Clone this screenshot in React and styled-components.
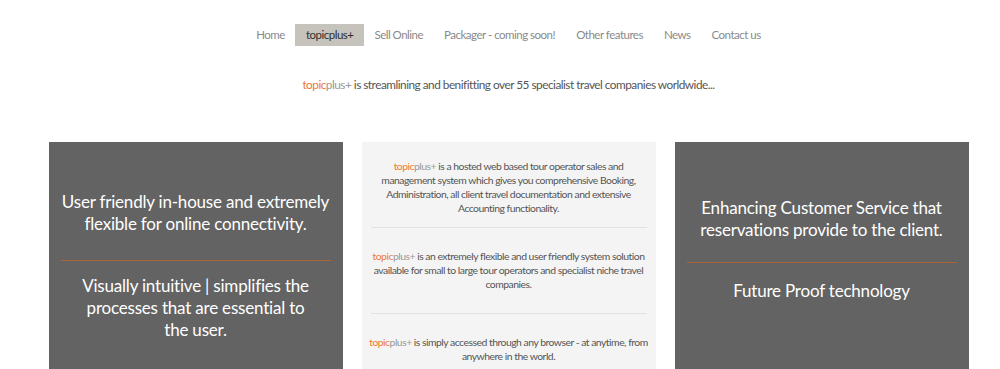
import React from 'react';
import styled, { createGlobalStyle } from 'styled-components';

const GlobalStyle = createGlobalStyle`
  html, body {
    margin: 0;
    padding: 0;
    background: #fff;
  }
  body {
    font-family: "Lato", "Open Sans", sans-serif;
    overflow: hidden;
  }
`;

const Page = styled.div`
  width: 1000px;
  height: 369px;
  overflow: hidden;
`;

const Nav = styled.ul`
  list-style: none;
  margin: 0;
  padding: 24px 0 0 17px;
  display: flex;
  justify-content: center;
`;

const NavItem = styled.li`
  height: 22px;
  line-height: 22px;
  padding: 0 10.5px;
  font-size: 11.5px;
  letter-spacing: -0.5px;
  color: ${props => (props.active ? '#2f2f2f' : '#8a8a8a')};
  background: ${props => (props.active ? '#c6c3bc' : 'transparent')};
`;

const Tagline = styled.p`
  margin: 31px 0 0;
  padding-left: 17px;
  text-align: center;
  font-size: 11.8px;
  letter-spacing: -0.5px;
  color: #555;
`;

const Topic = styled.span`
  color: #f07a2f;
`;

const Plus = styled.span`
  color: #999;
`;

const Cards = styled.div`
  display: grid;
  grid-template-columns: repeat(3, 294px);
  justify-content: center;
  gap: 19px;
  margin: 50px 0 0 17px;
`;

const DarkCard = styled.div`
  background: #636363;
  height: 240px;
  padding: ${props => props.top}px 12px 0;
  color: #fff;
  font-size: 17px;
  letter-spacing: -0.2px;
  line-height: 22px;
  text-align: center;
`;

const Statement = styled.p`
  margin: 0;
  padding: 0 ${props => props.inset || 0}px;
`;

const Rule = styled.hr`
  border: none;
  border-top: 1px solid ${props => props.color};
  margin: ${props => props.above}px ${props => props.side || 0}px ${props => props.below}px;
`;

const LightCard = styled.div`
  background: #f4f4f4;
  height: 240px;
  padding: 17px 6px 0;
  font-size: 10.4px;
  letter-spacing: -0.5px;
  line-height: 14px;
  color: #555;
  text-align: center;
`;

const Para = styled.p`
  margin: 0;
  padding: 0 ${props => props.inset || 0}px;
`;

const navItems = [
  'Home',
  'topicplus+',
  'Sell Online',
  'Packager - coming soon!',
  'Other features',
  'News',
  'Contact us',
];

const Brand = () => (
  <>
    <Topic>topic</Topic>
    <Plus>plus+</Plus>
  </>
);

const App = () => (
  <Page>
    <GlobalStyle />
    <Nav>
      {navItems.map(item => (
        <NavItem key={item} active={item === 'topicplus+'}>
          {item}
        </NavItem>
      ))}
    </Nav>
    <Tagline>
      <Brand /> is streamlining and benifitting over 55 specialist travel companies worldwide...
    </Tagline>
    <Cards>
      <DarkCard top={49}>
        <Statement>User friendly in-house and extremely flexible for online connectivity.</Statement>
        <Rule color="#a9643a" above={25} below={14} />
        <Statement inset={18}>
          Visually intuitive | simplifies the processes that are essential to the user.
        </Statement>
      </DarkCard>
      <LightCard>
        <Para inset={13}>
          <Brand /> is a hosted web based tour operator sales and management system which gives you
          comprehensive Booking, Administration, all client travel documentation and extensive
          Accounting functionality.
        </Para>
        <Rule color="#e2e2e2" side={3} above={12} below={21} />
        <Para inset={1}>
          <Brand /> is an extremely flexible and user friendly system solution available for small to
          large tour operators and specialist niche travel companies.
        </Para>
        <Rule color="#e2e2e2" side={3} above={22} below={21} />
        <Para>
          <Brand /> is simply accessed through any browser - at anytime, from anywhere in the world.
        </Para>
      </LightCard>
      <DarkCard top={55}>
        <Statement>Enhancing Customer Service that reservations provide to the client.</Statement>
        <Rule color="#a9643a" above={21} below={17} />
        <Statement>Future Proof technology</Statement>
      </DarkCard>
    </Cards>
  </Page>
);

export default App;
